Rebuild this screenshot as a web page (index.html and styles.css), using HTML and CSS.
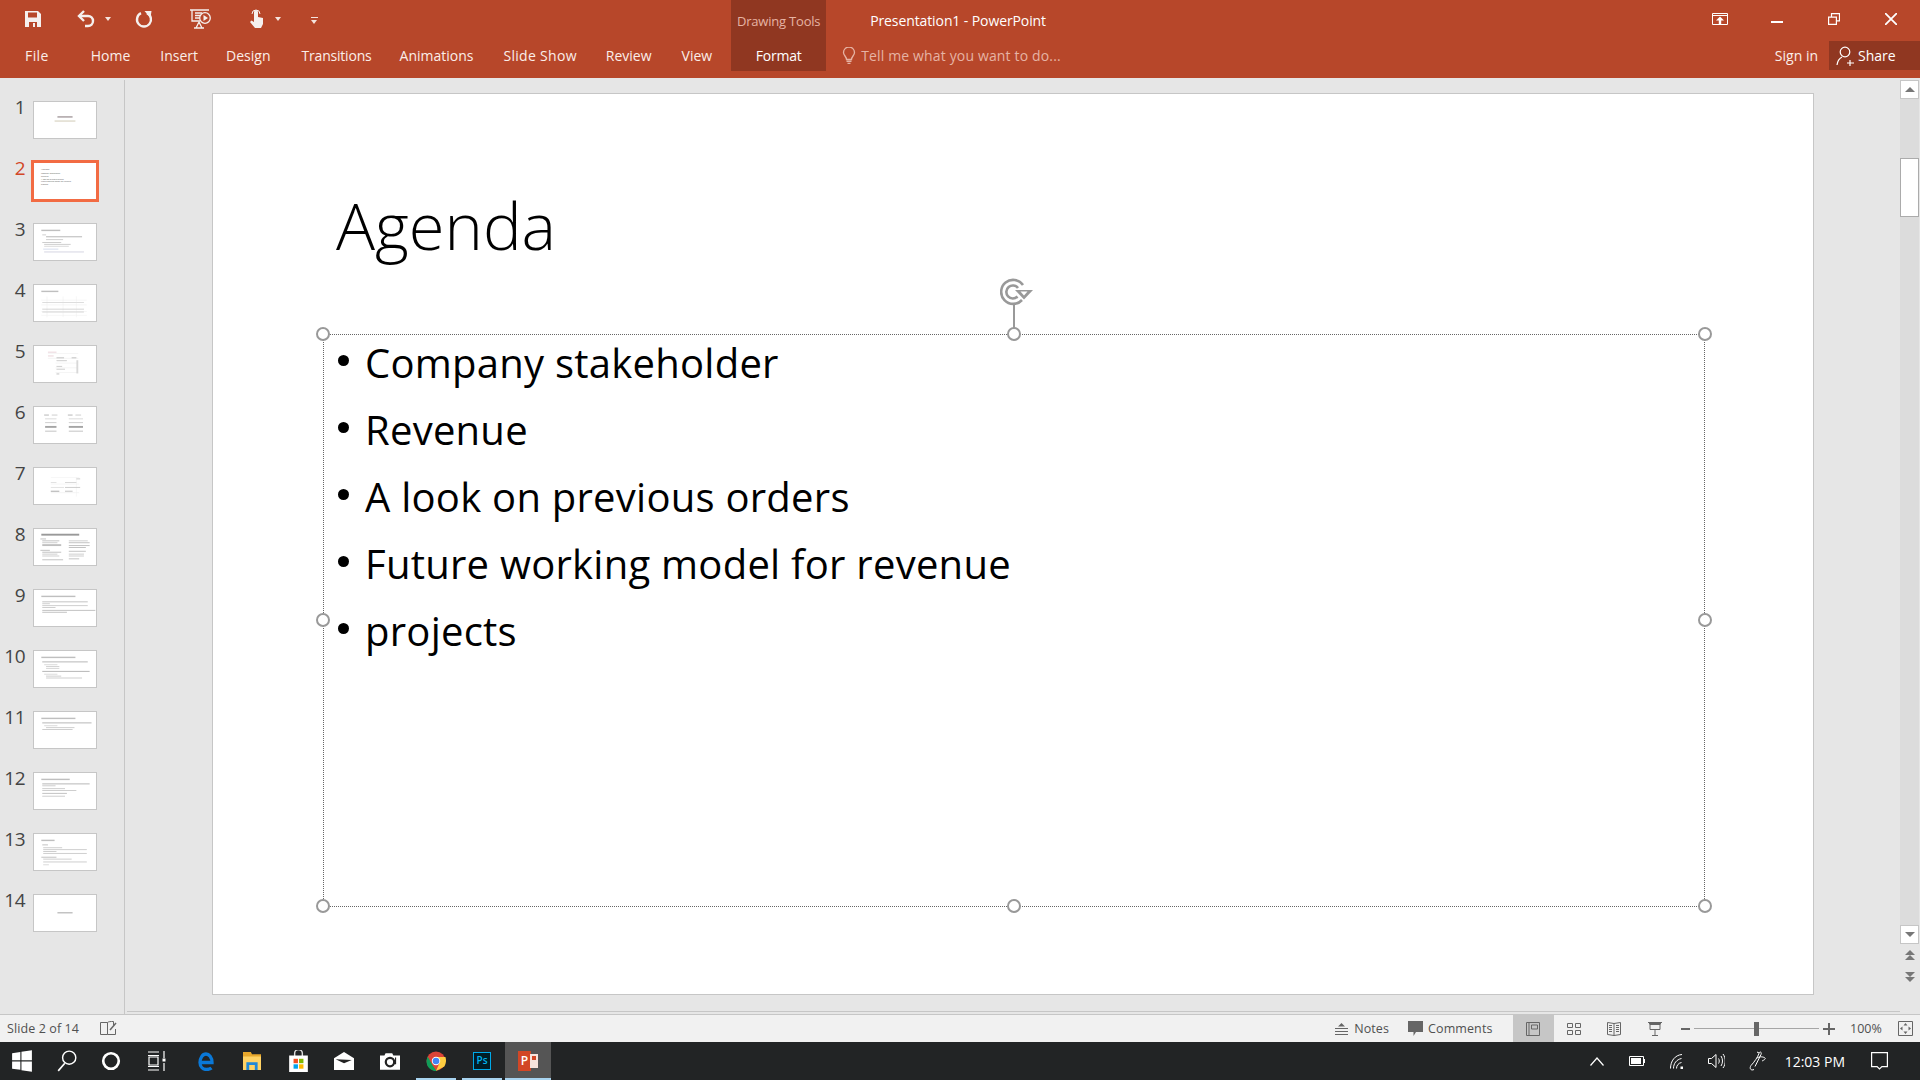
FILE: index.html
```html
<!DOCTYPE html>
<html lang="en">
<head>
<meta charset="utf-8">
<title>Presentation1 - PowerPoint</title>
<link rel="stylesheet" href="styles.css">
</head>
<body>
<div class="app">
  <header class="ribbon">
    <div class="qat">
      <svg class="qi save" width="18" height="18" viewBox="0 0 18 18"><path fill="#f5f0ee" d="M1 1h13l3 3v13H1z"/><path fill="#b7472a" d="M4 2.500h9v5H4zM5 12h8v5H5z"/><path fill="#f5f0ee" d="M9 13h2v4H9z"/></svg>
      <svg class="qi undo" width="20" height="18" viewBox="0 0 20 18"><path fill="none" stroke="#f5f0ee" stroke-width="2.400" d="M3 6h9a5 5 0 0 1 5 5 5 5 0 0 1-5 5H9"/><path fill="none" stroke="#f5f0ee" stroke-width="2.400" d="M8 1 3 6l5 5"/></svg>
      <span class="caret undo-caret"></span>
      <svg class="qi redo" width="18" height="18" viewBox="0 0 18 18"><path fill="none" stroke="#f5f0ee" stroke-width="2.400" d="M6 3.200a7 7 0 1 0 6 0"/><path fill="#f5f0ee" d="M9.500 1h7l-1 7z"/></svg>
      <svg class="qi show" width="22" height="20" viewBox="0 0 22 20"><path fill="none" stroke="#f5f0ee" stroke-width="1.300" d="M0 1h19M2 1v11h8M5 4h7M5 6.500h5M5 9h5M9 13l-3 6M9 13l3 6M4 19h10"/><circle cx="15" cy="9" r="5.300" fill="#b7472a" stroke="#f5f0ee" stroke-width="1.300"/><path fill="#f5f0ee" d="M13.500 6l4.500 3-4.500 3z"/></svg>
      <svg class="qi touch" width="16" height="20" viewBox="0 0 16 20"><path fill="#f5f0ee" d="M5 3a2 2 0 0 1 4 0v5l5 1v6l-2 4H6l-5-6 1.500-1.500L5 13z"/><path fill="none" stroke="#f5f0ee" d="M3 5a4 4 0 0 1 8 0"/></svg>
      <span class="caret touch-caret"></span>
      <span class="more"></span>
    </div>
    <div class="tabs">
      <span class="tab file">File</span>
      <span class="tab home">Home</span>
      <span class="tab insert">Insert</span>
      <span class="tab design">Design</span>
      <span class="tab transitions">Transitions</span>
      <span class="tab animations">Animations</span>
      <span class="tab slideshow">Slide Show</span>
      <span class="tab review">Review</span>
      <span class="tab view">View</span>
    </div>
    <div class="context">
      <span class="context-name">Drawing Tools</span>
      <span class="context-tab">Format</span>
    </div>
    <div class="middle">
      <div class="doc-title">Presentation1 - PowerPoint</div>
      <div class="tell">
        <svg width="14" height="18" viewBox="0 0 14 18"><path fill="none" stroke="#e6b3a4" stroke-width="1.300" d="M4.500 12.500c0-3-3-4-3-7a5.500 5.500 0 0 1 11 0c0 3-3 4-3 7z"/><path fill="#e6b3a4" d="M4.500 13.500h5v1.500h-5zM5.500 15.800h3V17h-3z"/></svg>
        <span>Tell me what you want to do...</span>
      </div>
    </div>
    <div class="right">
      <div class="winctl">
        <svg class="w-restore-ribbon" width="16" height="12" viewBox="0 0 16 12"><path fill="none" stroke="#fff" d="M.500.500h15v11H.500zM1 2.500h14"/><path fill="#fff" d="M8 3.500l4 4H9.200V11H6.800V7.500H4z"/></svg>
        <svg class="w-min" width="12" height="2" viewBox="0 0 12 2"><path fill="#fff" d="M0 0h12v2H0z"/></svg>
        <svg class="w-max" width="12" height="12" viewBox="0 0 12 12"><path fill="none" stroke="#fff" stroke-width="1.200" d="M.600 4.100h7.800v7.300H.600zM3.500 4V.600h8v7.300H8.500"/></svg>
        <svg class="w-close" width="12" height="12" viewBox="0 0 12 12"><path stroke="#fff" stroke-width="1.800" d="M0 0l12 12M12 0 0 12"/></svg>
      </div>
      <div class="account">
        <span class="signin">Sign in</span>
        <span class="share">
          <svg width="20" height="20" viewBox="0 0 20 20"><circle cx="9" cy="6" r="4.800" fill="none" stroke="#fff" stroke-width="1.200"/><path fill="none" stroke="#fff" stroke-width="1.200" d="M1 19c.5-4 3-7 5-8M14 14v6M11 17h7"/></svg>
          Share
        </span>
      </div>
    </div>
  </header>

  <div class="workspace">
    <aside class="thumbs" id="thumbs">
      <div class="thumb-row"><span class="num">1</span><div class="thumb"><svg viewBox="0 0 64 38"><rect x="24" y="15" width="16" height="1.500" fill="#8a7d80"/><rect x="21" y="19.500" width="22" height="1.200" fill="#c9c2a8"/></svg></div></div>
      <div class="thumb-row current"><span class="num">2</span><div class="thumb"><div class="mini-title">Agenda</div><ul class="mini-list"><li>Company stakeholder</li><li>Revenue</li><li>A look on previous orders</li><li>Future working model for revenue</li><li>projects</li></ul></div></div>
      <div class="thumb-row"><span class="num">3</span><div class="thumb"><svg viewBox="0 0 64 38"><rect x="7" y="6" width="20" height="1.500" fill="#aaa"/><rect x="8" y="11" width="4" height="1" fill="#bbb"/><rect x="12" y="13" width="38" height="1" fill="#999"/><rect x="12" y="16" width="18" height="1" fill="#bbb"/><rect x="8" y="19" width="20" height="1" fill="#bbb"/><rect x="10" y="21" width="28" height="1" fill="#bbb"/><rect x="10" y="23" width="26" height="1" fill="#ccc"/><rect x="9" y="26" width="16" height="1" fill="#c5cfe6"/><rect x="10" y="29" width="42" height="1" fill="#c5c5d6"/></svg></div></div>
      <div class="thumb-row"><span class="num">4</span><div class="thumb"><svg viewBox="0 0 64 38"><rect x="7" y="6" width="18" height="1.500" fill="#aaa"/><path stroke="#e6e6e6" stroke-width=".5" d="M7 16h48M7 21h48M7 28h48M7 32h48M13 12v22M30 12v22M44 12v22"/><rect x="8" y="18" width="44" height="1" fill="#d0d0d0"/><rect x="8" y="25" width="44" height="1" fill="#c4c4c4"/><rect x="8" y="28" width="44" height="1" fill="#c4c4c4"/></svg></div></div>
      <div class="thumb-row"><span class="num">5</span><div class="thumb"><svg viewBox="0 0 64 38"><rect x="14" y="6" width="9" height="1" fill="#e2c4cc"/><rect x="14" y="10" width="6" height="1" fill="#e2c4cc"/><path stroke="#e2e2e2" stroke-width=".5" d="M14 8h32M14 13h32M22 18h24M22 23h24M22 28h24"/><rect x="23" y="12" width="8" height="1" fill="#aaa"/><rect x="39" y="12" width="5" height="1" fill="#aaa"/><rect x="23" y="15" width="11" height="1" fill="#bbb"/><rect x="44" y="15" width="2" height="14" fill="#ccc"/><rect x="23" y="21" width="6" height="1" fill="#bbb"/><rect x="23" y="24" width="9" height="1" fill="#bbb"/><rect x="23" y="29" width="3" height="1" fill="#aaa"/></svg></div></div>
      <div class="thumb-row"><span class="num">6</span><div class="thumb"><svg viewBox="0 0 64 38"><rect x="10" y="8" width="5" height="1" fill="#999"/><rect x="18" y="8" width="6" height="1" fill="#bbb"/><rect x="35" y="8" width="5" height="1" fill="#999"/><rect x="43" y="8" width="6" height="1" fill="#bbb"/><rect x="11" y="12" width="12" height="1" fill="#ccc"/><rect x="36" y="12" width="15" height="1" fill="#ccc"/><rect x="11" y="16" width="12" height="1" fill="#bbb"/><rect x="36" y="16" width="15" height="1" fill="#bbb"/><rect x="11" y="20" width="12" height="2" fill="#888"/><rect x="36" y="20" width="15" height="2" fill="#888"/><rect x="11" y="25" width="12" height="1" fill="#aaa"/><rect x="36" y="25" width="15" height="1" fill="#aaa"/></svg></div></div>
      <div class="thumb-row"><span class="num">7</span><div class="thumb"><svg viewBox="0 0 64 38"><path stroke="#e6e6e6" stroke-width=".5" d="M17 10h30M17 17h30M17 26h30M44 10v20"/><rect x="44" y="11" width="4" height="1" fill="#bbb"/><rect x="17" y="15" width="6" height=".8" fill="#ccc"/><rect x="32" y="15" width="12" height=".8" fill="#bbb"/><rect x="17" y="20" width="14" height=".8" fill="#ccc"/><rect x="32" y="20" width="16" height=".8" fill="#aaa"/><rect x="17" y="24" width="9" height="1" fill="#888"/><rect x="32" y="24" width="8" height="1" fill="#aaa"/></svg></div></div>
      <div class="thumb-row"><span class="num">8</span><div class="thumb"><svg viewBox="0 0 64 38"><rect x="7" y="5" width="40" height="2" fill="#777"/><rect x="6" y="10" width="6" height="1" fill="#aaa"/><rect x="8" y="12" width="18" height="1" fill="#aaa"/><rect x="8" y="14" width="16" height="1" fill="#bbb"/><rect x="8" y="16" width="20" height="2" fill="#aaa"/><rect x="6" y="22" width="10" height="1" fill="#aaa"/><rect x="8" y="24" width="20" height="1" fill="#aaa"/><rect x="8" y="26" width="16" height="1" fill="#bbb"/><rect x="8" y="28" width="18" height="1" fill="#bbb"/><rect x="8" y="32" width="22" height="1" fill="#aaa"/><rect x="36" y="12" width="20" height="1" fill="#bbb"/><rect x="36" y="14" width="22" height="1" fill="#aaa"/><rect x="36" y="17" width="22" height="1" fill="#aaa"/><rect x="36" y="19" width="18" height="1" fill="#aaa"/><rect x="36" y="23" width="18" height="1" fill="#aaa"/><rect x="36" y="26" width="16" height="1" fill="#bbb"/><rect x="36" y="28" width="16" height="1" fill="#bbb"/><rect x="36" y="31" width="11" height="1" fill="#aaa"/></svg></div></div>
      <div class="thumb-row"><span class="num">9</span><div class="thumb"><svg viewBox="0 0 64 38"><rect x="7" y="6" width="36" height="1.500" fill="#aaa"/><rect x="8" y="12" width="48" height="1" fill="#aaa"/><rect x="8" y="14" width="8" height="1" fill="#bbb"/><rect x="8" y="16" width="48" height="1" fill="#bbb"/><rect x="8" y="18" width="14" height="1" fill="#bbb"/><rect x="8" y="21" width="56" height="1" fill="#aaa"/><rect x="8" y="23" width="26" height="1" fill="#aaa"/></svg></div></div>
      <div class="thumb-row"><span class="num">10</span><div class="thumb"><svg viewBox="0 0 64 38"><rect x="7" y="6" width="36" height="1.500" fill="#aaa"/><rect x="8" y="11" width="48" height="1" fill="#999"/><rect x="10" y="14" width="14" height="1" fill="#ccc"/><rect x="12" y="16" width="14" height="1" fill="#bbb"/><rect x="12" y="18" width="14" height="1" fill="#ccc"/><rect x="8" y="21" width="50" height="1" fill="#999"/><rect x="10" y="24" width="14" height="1" fill="#ccc"/><rect x="12" y="26" width="16" height="1" fill="#bbb"/><rect x="12" y="28" width="38" height="1" fill="#bbb"/></svg></div></div>
      <div class="thumb-row"><span class="num">11</span><div class="thumb"><svg viewBox="0 0 64 38"><rect x="7" y="6" width="36" height="1.500" fill="#aaa"/><rect x="8" y="11" width="52" height="1" fill="#999"/><rect x="10" y="14" width="14" height="1" fill="#ccc"/><rect x="12" y="16" width="30" height="1" fill="#bbb"/><rect x="8" y="18" width="32" height="1" fill="#bbb"/></svg></div></div>
      <div class="thumb-row"><span class="num">12</span><div class="thumb"><svg viewBox="0 0 64 38"><rect x="7" y="6" width="30" height="1.500" fill="#aaa"/><rect x="8" y="11" width="50" height="1" fill="#999"/><rect x="8" y="13" width="14" height="1" fill="#bbb"/><rect x="8" y="16" width="24" height="1" fill="#bbb"/><rect x="8" y="18" width="36" height="1" fill="#bbb"/><rect x="8" y="21" width="26" height="1" fill="#aaa"/><rect x="8" y="24" width="24" height="1" fill="#bbb"/></svg></div></div>
      <div class="thumb-row"><span class="num">13</span><div class="thumb"><svg viewBox="0 0 64 38"><rect x="7" y="6" width="14" height="1.500" fill="#aaa"/><rect x="8" y="11" width="6" height="1" fill="#aaa"/><rect x="9" y="14" width="20" height="1" fill="#bbb"/><rect x="9" y="16" width="46" height="1" fill="#bbb"/><rect x="9" y="18" width="14" height="1" fill="#bbb"/><rect x="9" y="20" width="46" height="1" fill="#bbb"/><rect x="7" y="24" width="16" height="1" fill="#aaa"/><rect x="9" y="26" width="30" height="1" fill="#bbb"/><rect x="9" y="29" width="46" height="1" fill="#bbb"/><rect x="9" y="32" width="6" height="1" fill="#ccc"/></svg></div></div>
      <div class="thumb-row"><span class="num">14</span><div class="thumb"><svg viewBox="0 0 64 38"><rect x="24" y="18" width="16" height="1.500" fill="#aaa"/></svg></div></div>
    </aside>

    <main class="stage">
      <section class="slide">
        <h1 class="slide-title">Agenda</h1>
        <div class="placeholder">
          <ul class="bullets">
            <li>Company stakeholder</li>
            <li>Revenue</li>
            <li>A look on previous orders</li>
            <li>Future working model for revenue</li>
            <li>projects</li>
          </ul>
          <span class="rot-line"></span>
          <svg class="rot" width="34" height="30" viewBox="0 0 34 30"><path fill="none" stroke="#999" stroke-width="2.600" d="M22 24A12 12 0 1 1 23 9"/><path fill="none" stroke="#999" stroke-width="2.600" d="M17.500 20.500A6.500 6.500 0 1 1 18 12"/><path fill="#999" d="M15 14h18l-9 9.500z"/><path fill="#fff" d="M20.500 15.500h7L24 19.500z"/></svg>
          <span class="h tl"></span><span class="h tc"></span><span class="h tr"></span>
          <span class="h ml"></span><span class="h mr"></span>
          <span class="h bl"></span><span class="h bc"></span><span class="h br"></span>
        </div>
      </section>
    </main>

    <div class="vscroll">
      <span class="sbtn up"><i class="tri-up"></i></span>
      <div class="track"><span class="knob"></span></div>
      <span class="sbtn down"><i class="tri-down"></i></span>
      <div class="pager">
        <span class="stack"><i class="tri-up"></i><i class="tri-up"></i></span>
        <span class="stack"><i class="tri-down"></i><i class="tri-down"></i></span>
      </div>
    </div>
  </div>

  <footer class="status">
    <span class="st-slide">Slide 2 of 14</span>
    <svg class="st-spell" width="18" height="16" viewBox="0 0 18 16"><path fill="none" stroke="#666" d="M.500 1.500h7v12h-7zM7.500 1.500c1-1 3-1 6-1v4M7.500 13.500h8V8"/><path stroke="#666" stroke-width="1.500" d="M10 9l6-7"/></svg>
    <div class="st-right">
      <span class="st-btn"><svg width="13" height="12" viewBox="0 0 13 12"><path fill="#666" d="M6.500 0 10 3.500H3zM0 5h13v1H0zM0 8h13v1H0zM0 11h13v1H0z"/></svg>Notes</span>
      <span class="st-btn comments"><svg width="15" height="15" viewBox="0 0 15 15"><path fill="#666" d="M0 0h15v11H8l-2.500 4v-4H0z"/></svg>Comments</span>
      <div class="views">
        <span class="view-btn on"><svg width="14" height="14" viewBox="0 0 14 14"><path fill="none" stroke="#666" d="M.500.500h13v13H.500zM3 .500v13M5.500 3h6v4h-6z"/></svg></span>
        <span class="view-btn"><svg width="14" height="12" viewBox="0 0 14 12"><path fill="none" stroke="#666" d="M.500.500h5v4h-5zM8.500.500h5v4h-5zM.500 7.500h5v4h-5zM8.500 7.500h5v4h-5z"/></svg></span>
        <span class="view-btn"><svg width="14" height="14" viewBox="0 0 14 14"><path fill="none" stroke="#666" d="M.500.500 7 1.500 13.500.500v12L7 13.500.500 12.500zM7 1.500v12M2 3.500h3M2 5.500h3M2 7.500h3M2 9.500h3M9 3.500h3M9 5.500h3M9 7.500h3M9 9.500h3"/></svg></span>
        <span class="view-btn"><svg width="14" height="14" viewBox="0 0 14 14"><path fill="none" stroke="#666" d="M0 .500h14M2 2.500h10v5H2zM7 8v5M4 13.500h6"/><path stroke="#666" stroke-width="2" d="M1 1.500h12"/></svg></span>
      </div>
      <div class="zoom">
        <span class="minus"></span>
        <div class="slider"><span class="slider-knob"></span></div>
        <span class="plus"></span>
      </div>
      <span class="pct">100%</span>
      <svg class="fit" width="15" height="15" viewBox="0 0 15 15"><path fill="none" stroke="#666" d="M.500.500h14v14H.500z"/><path fill="#666" d="M7.500 2l2 2.500h-4zM7.500 13l-2-2.500h4zM2 7.500 4.500 5.500v4zM13 7.500l-2.500 2v-4z"/></svg>
    </div>
  </footer>

  <nav class="taskbar">
    <span class="tb sys"><svg width="20" height="22" viewBox="0 0 18 20"><path fill="#fff" d="M0 3l7.500-1.100v7.500H0zM8.500 1.700 18 .3v9.100H8.500zM0 10.500h7.500V18L0 17zM8.500 10.500H18v9.200l-9.500-1.400z"/></svg></span>
    <span class="tb sys"><svg width="20" height="22" viewBox="0 0 18 20"><circle cx="11" cy="7" r="6" fill="none" stroke="#fff" stroke-width="1.300"/><path stroke="#fff" stroke-width="1.500" d="M7 12 1 19"/></svg></span>
    <span class="tb sys"><svg width="20" height="20" viewBox="0 0 18 18"><circle cx="9" cy="9" r="7" fill="none" stroke="#fff" stroke-width="2.400"/></svg></span>
    <span class="tb sys last"><svg width="20" height="20" viewBox="0 0 18 20"><path fill="none" stroke="#fff" stroke-width="1.200" d="M1 1h11M2 6h9v8H2zM1 19h11M1 4.500h11M1 15.500h11M17 0v7M17 12v8"/><path fill="#fff" d="M15.500 7.500h3v3h-3z"/></svg></span>
    <span class="tb"><svg width="16" height="19" viewBox="0 0 16 19"><path fill="none" stroke="#0a78d7" stroke-width="3.300" d="M2 10.500h12C14 5 11 2 8 2 4.500 2 2 6 2 10.500 2 15 5 17.500 8.500 17.500c2 0 3.800-.5 5-1.500"/></svg></span>
    <span class="tb"><svg width="18" height="18" viewBox="0 0 16 16"><path fill="#e8a72b" d="M0 0h7l1 2h8v14H0z"/><path fill="#ffd264" d="M0 4h16v12H0z"/><path fill="#1f88d8" d="M3 9h10v7h-2.500v-4.500h-5V16H3z"/></svg></span>
    <span class="tb"><svg width="19" height="22" viewBox="0 0 17 20"><path fill="none" stroke="#ddd" stroke-width="1.300" d="M5 6V3a3.500 3.500 0 0 1 7 0v3"/><path fill="#fff" d="M0 5h17v15H0z"/><path fill="#f25022" d="M4 8h4v4H4z"/><path fill="#7fba00" d="M9 8h4v4H9z"/><path fill="#00a4ef" d="M4 13h4v4H4z"/><path fill="#ffb900" d="M9 13h4v4H9z"/></svg></span>
    <span class="tb"><svg width="20" height="18" viewBox="0 0 18 16"><path fill="#fff" d="M0 5.500 9 0l9 5.500V16H0z"/><path fill="#222" d="M1.500 6.500 16 7 9 10z"/></svg></span>
    <span class="tb"><svg width="20" height="17" viewBox="0 0 18 15"><path fill="#fff" d="M0 2h4l1-2h6l1 2h6v13H0z"/><circle cx="9" cy="8" r="3.800" fill="none" stroke="#222" stroke-width="2"/><path stroke="#222" d="M14 4v6"/></svg></span>
    <span class="tb run"><svg width="20" height="20" viewBox="0 0 18 18"><circle cx="9" cy="9" r="8.500" fill="#db4437"/><path fill="#0f9d58" d="M1.500 5 6 13l3.500 5C4 18 0 14 .500 8z"/><path fill="#ffcd40" d="M9 5.500h8.500c1 3 .5 6-1 8.500L9 18l3.500-8z"/><circle cx="9" cy="9" r="3.800" fill="#fff"/><circle cx="9" cy="9" r="3" fill="#4285f4"/></svg></span>
    <span class="tb run"><span class="ps">Ps</span></span>
    <span class="tb run active"><span class="ppt"><b>P</b><i></i></span></span>
    <div class="tray">
      <svg width="14" height="9" viewBox="0 0 14 9"><path fill="none" stroke="#fff" stroke-width="1.200" d="M.500 8.500 7 1l6.500 7.500"/></svg>
      <svg width="16" height="10" viewBox="0 0 16 10"><path fill="none" stroke="#fff" d="M.500.500h14v9H.500z"/><path fill="#fff" d="M2 2h10v6H2zM15 3h1v4h-1z"/></svg>
      <svg width="14" height="15" viewBox="0 0 14 15"><path fill="none" stroke="#fff" d="M.500 14.500C.500 7 5 1 12 .500M3.500 14.500c0-5 3-9 8-10M6.500 14.500c0-3 2-5.500 5-6"/><path fill="#fff" d="M10.500 12.500h2.500V15h-2.500z"/></svg>
      <svg class="vol" width="17" height="16" viewBox="0 0 17 16"><path fill="none" stroke="#fff" d="M.500 5.500h3L8 1.500v13l-4.500-4h-3zM10.500 5.500c1 1.500 1 3.500 0 5M13 3c2 3 2 7 0 10M15 1c3 4 3 10 0 14"/></svg>
      <svg class="pen" width="18" height="20" viewBox="0 0 18 20"><path fill="none" stroke="#fff" d="M6 18.500c-3 1.500-5-1-3-4 3-3 7-9 8-12 1-3 3-1 2 1l-6 12M9 7c3-2 7-1 8 0s-1 2-3 3M11 2 9 1"/></svg>
      <span class="clock">12:03 PM</span>
      <svg class="notif" width="17" height="18" viewBox="0 0 17 18"><path fill="none" stroke="#fff" stroke-width="1.200" d="M.600.600h15.800v14h-5.500l-2.400 2.400-2.400-2.400H.600z"/></svg>
    </div>
  </nav>
</div>
</body>
</html>
```
FILE: styles.css
```css
* { box-sizing: border-box; }
html, body { margin: 0; height: 100%; overflow: hidden; }
body { font-family: "Open Sans", "Noto Sans", sans-serif; background: #e6e6e6; }
.app { width: 1920px; height: 1080px; display: flex; flex-direction: column; }

/* ribbon */
.ribbon { height: 78px; flex: none; background: #b7472a; color: #fff; display: flex; position: relative; }
.qat { position: absolute; left: 0; top: 0; width: 400px; height: 38px; }
.qi { position: absolute; }
.save { left: 24px; top: 10px; }
.undo { left: 76px; top: 10px; }
.redo { left: 135px; top: 10px; }
.show { left: 190px; top: 9px; }
.touch { left: 249px; top: 9px; }
.caret { position: absolute; top: 17px; border: 3.500px solid transparent; border-top: 4px solid #f5e4de; border-bottom: 0; }
.undo-caret { left: 105px; }
.touch-caret { left: 275px; }
.more { position: absolute; left: 311px; top: 17px; width: 7px; height: 5px; border-top: 1px solid #f5e4de; }
.more::after { content: ""; position: absolute; left: 0; top: 2px; border: 3.500px solid transparent; border-top: 4px solid #f5e4de; border-bottom: 0; }

.tabs { display: flex; align-items: center; height: 38px; margin-top: 36px; padding-left: 25px; font-size: 14px; letter-spacing: -.2px; color: #fbeee9; }
.tab { white-space: nowrap; }
.file { letter-spacing: .4px; }
.home { margin-left: 42px; letter-spacing: 0; }
.insert { margin-left: 30px; letter-spacing: 0; }
.design { margin-left: 28px; letter-spacing: 0; }
.transitions { margin-left: 31px; }
.animations { margin-left: 28px; letter-spacing: 0; }
.slideshow { margin-left: 30px; letter-spacing: .3px; }
.review { margin-left: 29px; letter-spacing: 0; }
.view { margin-left: 30px; letter-spacing: 0; }
.context { width: 95px; height: 71px; margin-left: 19px; background: #903721; display: flex; flex-direction: column; align-items: center; flex: none; }
.context-name { font-size: 13px; color: #e6b3a4; margin-top: 12px; letter-spacing: -.2px; white-space: nowrap; }
.context-tab { font-size: 14px; color: #fff; margin-top: 16px; letter-spacing: -.2px; }
.middle { flex: 1; position: relative; }
.doc-title { font-size: 14px; position: absolute; left: 44px; top: 11px; white-space: nowrap; letter-spacing: -.1px; }
.tell { position: absolute; left: 16px; top: 46px; display: flex; align-items: center; gap: 5px; font-size: 14px; color: #e6b3a4; white-space: nowrap; letter-spacing: .15px; }
.right { width: 220px; flex: none; display: flex; flex-direction: column; position: relative; }
.winctl { height: 41px; position: relative; }
.winctl svg { position: absolute; }
.w-restore-ribbon { left: 12px; top: 13px; }
.w-min { left: 71px; top: 21px; }
.w-max { left: 128px; top: 13px; }
.w-close { left: 185px; top: 13px; }
.account { display: flex; align-items: center; height: 29px; justify-content: flex-end; }
.signin { font-size: 14px; color: #fbeee9; margin-right: 11px; white-space: nowrap; }
.share { width: 91px; height: 29px; background: #903721; font-size: 14px; display: flex; align-items: center; gap: 2px; padding-left: 7px; flex: none; }

/* workspace */
.workspace { flex: 1; display: flex; min-height: 0; border-bottom: 1px solid #c6c6c6; }
.thumbs { width: 125px; flex: none; border-right: 1px solid #c6c6c6; padding-top: 21px; margin-top: 2px; }
.thumb-row { height: 61px; display: flex; align-items: flex-start; position: relative; }
.num { width: 25px; font-size: 19px; line-height: 20px; color: #444; text-align: right; margin-top: -4px; letter-spacing: -.5px; }
.current .num { color: #d24726; }
.thumb { width: 64px; height: 38px; margin-left: 8px; background: #fff; border: 1px solid #c6c6c6; overflow: hidden; position: relative; flex: none; }
.thumb svg { display: block; width: 62px; height: 36px; opacity: .75; filter: blur(.35px); }
.current .thumb { border-color: #f26b43; box-shadow: 0 0 0 2px #f26b43; }
.mini-title { font-size: 2.400px; color: #555; position: absolute; left: 7px; top: 4px; }
.mini-list { position: absolute; left: 7px; top: 10px; margin: 0; padding: 0; list-style: none; font-size: 1.900px; line-height: 2.800px; color: #555; white-space: nowrap; }

.stage { flex: 1; min-width: 0; margin: 0 0 2px 2px; padding: 15px 0 0 85px; border-bottom: 1px solid #c6c6c6; }
.slide { width: 1602px; height: 902px; background: #fff; border: 1px solid #c6c6c6; position: relative; padding: 93px 0 0 123px; }
.slide-title { margin: 0; font-weight: 300; font-size: 65px; line-height: 76px; color: #000; font-family: "Open Sans", sans-serif; }
.placeholder { position: absolute; left: 110px; top: 240px; width: 1382px; height: 573px; border: 1px dotted #666; }
.bullets { margin: -13.500px 0 0; padding: 7px 0 0 13px; list-style: none; font-size: 40px; line-height: 67px; color: #000; letter-spacing: .25px; }
.bullets li { position: relative; padding-left: 28px; white-space: nowrap; }
.bullets li::before { content: ""; position: absolute; left: 1px; top: 26px; width: 11px; height: 11px; border-radius: 50%; background: #000; }
.h { position: absolute; width: 14px; height: 14px; border-radius: 50%; background: #fff; border: 2.500px solid #999; }
.tl { left: -8px; top: -8px; }
.tc { left: 683px; top: -8px; }
.tr { left: 1374px; top: -8px; }
.ml { left: -8px; top: 278px; }
.mr { left: 1374px; top: 278px; }
.bl { left: -8px; top: 564px; }
.bc { left: 683px; top: 564px; }
.br { left: 1374px; top: 564px; }
.rot-line { position: absolute; left: 689px; top: -31px; width: 2px; height: 24px; background: #999; }
.rot { position: absolute; left: 676px; top: -59px; }

/* scrollbar */
.vscroll { width: 19px; margin-right: 1px; flex: none; display: flex; flex-direction: column; padding-top: 2px; }
.sbtn { height: 19px; background: #fff; border: 1px solid #c6c6c6; display: flex; align-items: center; justify-content: center; flex: none; }
.track { height: 826px; background: #dcdcdc; flex: none; padding-top: 59px; }
.knob { display: block; height: 59px; background: #fff; border: 1px solid #ababab; }
.tri-up, .tri-down { display: block; width: 0; height: 0; border-left: 5px solid transparent; border-right: 5px solid transparent; }
.tri-up { border-bottom: 5px solid #777; }
.tri-down { border-top: 5px solid #777; }
.pager { display: flex; flex-direction: column; align-items: center; gap: 12px; padding-top: 6px; }
.stack { display: block; }

/* status bar */
.status { height: 27px; flex: none; background: #f1f1f1; display: flex; align-items: center; font-size: 12.500px; color: #505050; letter-spacing: .1px; }
.st-slide { margin-left: 7px; }
.st-spell { margin-left: 21px; }
.st-right { margin-left: auto; display: flex; align-items: center; height: 100%; }
.st-btn { display: flex; align-items: center; gap: 6px; white-space: nowrap; }
.comments { margin-left: 19px; gap: 5px; }
.views { display: flex; margin-left: 20px; height: 100%; }
.view-btn { width: 40.500px; height: 100%; display: flex; align-items: center; justify-content: center; }
.view-btn.on { background: #c6c6c6; width: 41px; }
.zoom { width: 154px; position: relative; margin-left: 6px; height: 100%; flex: none; }
.minus { position: absolute; left: 0; top: 13px; width: 9px; height: 2px; background: #666; }
.slider { position: absolute; left: 13px; top: 13px; width: 125px; height: 1px; background: #a6a6a6; }
.slider-knob { position: absolute; left: 60px; top: -6px; width: 5px; height: 14px; background: #666; }
.plus { position: absolute; left: 142px; top: 13px; width: 12px; height: 2px; background: #666; }
.plus::after { content: ""; position: absolute; left: 5px; top: -5px; width: 2px; height: 12px; background: #666; }
.pct { margin-left: 15px; width: 33px; flex: none; letter-spacing: 0; }
.fit { margin: 0 7px 0 15px; flex: none; }

/* taskbar */
.taskbar { height: 38px; flex: none; background: #222425; display: flex; align-items: center; }
.tb { width: 46px; height: 38px; flex: none; display: flex; align-items: center; justify-content: center; position: relative; }
.tb.sys { width: 44.500px; }
.tb.last { margin-right: 5px; }
.tb.run::after { content: ""; position: absolute; left: 3px; right: 3px; bottom: 0; height: 2px; background: #a8d4f0; }
.tb.active { background: #555; }
.tb.active::after { left: 0; right: 0; }
.ps { width: 18px; height: 18px; background: #001d26; border: 1.500px solid #00a9e8; color: #00b4f0; font-size: 10px; font-weight: 600; line-height: 15px; text-align: center; }
.ppt { position: relative; width: 20px; height: 20px; display: block; }
.ppt b { position: absolute; left: 0; top: 0; width: 13px; height: 20px; background: #d24726; color: #fff; font-size: 12px; line-height: 20px; text-align: center; font-weight: 600; }
.ppt i { position: absolute; left: 12px; top: 3px; width: 8px; height: 14px; background: #f6e3dc; }
.ppt i::after { content: ""; position: absolute; left: 2px; top: 2px; width: 4px; height: 4px; background: #d24726; }
.tray { margin-left: auto; display: flex; align-items: center; height: 100%; color: #fff; padding-right: 32px; }
.tray svg { flex: none; margin-left: 25px; }
.tray .vol { margin-left: 24px; }
.tray .pen { margin-left: 23px; }
.clock { font-size: 14px; margin-left: 19px; white-space: nowrap; }
.tray .notif { margin-left: 26px; }
```
